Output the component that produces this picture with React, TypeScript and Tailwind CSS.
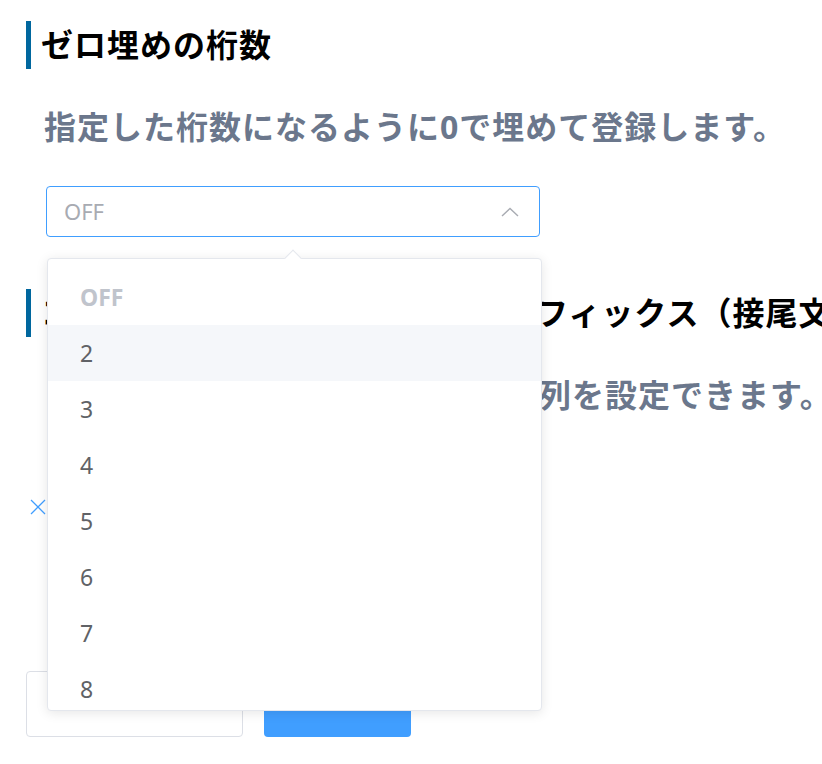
import { useState } from 'react';

const font = { fontFamily: '"Noto Sans", "Noto Sans CJK JP", sans-serif' };

const options = ['OFF', '2', '3', '4', '5', '6', '7', '8', '9', '10'];

function SectionTitle({ children }: { children: React.ReactNode }) {
    return (
        <h2 className="flex items-center h-[48px] border-l-[5px] border-[#00679e] pl-[10px] text-[32px] font-bold text-black tracking-[1px] whitespace-nowrap leading-none">
            {children}
        </h2>
    );
}

function Lead({ children }: { children: React.ReactNode }) {
    return (
        <p className="mt-[38px] ml-[18px] h-[40px] flex items-center text-[32px] font-bold text-[#6b778c] tracking-[1px] whitespace-nowrap">
            {children}
        </p>
    );
}

export default function App() {
    const [hovered] = useState('2');

    return (
        <div className="relative w-[822px] h-[764px] bg-white overflow-hidden" style={font}>
            <div className="pl-[26px] pt-[21px]">
                {/* ゼロ埋め */}
                <SectionTitle>ゼロ埋めの桁数</SectionTitle>
                <Lead>指定した桁数になるように0で埋めて登録します。</Lead>

                <div className="relative mt-[39px] ml-[20px] w-[494px]">
                    <div className="flex items-center justify-between h-[51px] border border-[#409eff] rounded-[4px] pl-[17px] pr-[20px]">
                        <span className="text-[22px] text-[#a8abb2]">OFF</span>
                        <svg width="18" height="10" viewBox="0 0 18 10" fill="none" stroke="#a8abb2" strokeWidth="1.4">
                            <polyline points="1,9 9,1.5 17,9" />
                        </svg>
                    </div>

                    {/* Dropdown */}
                    <div className="absolute left-[1px] top-[72px] z-10 w-[495px] h-[453px] bg-white border border-[#e4e7ed] rounded-[4px] shadow-[0_2px_12px_0_rgba(0,0,0,0.1)]">
                        <div className="absolute -top-[7px] left-[239px] w-[12px] h-[12px] rotate-45 bg-white border-t border-l border-[#e4e7ed]"></div>
                        <div className="relative h-full overflow-hidden rounded-[4px] pt-[10px]">
                            {options.map(opt => (
                                <div
                                    key={opt}
                                    className={`flex items-center h-[56px] px-[32px] text-[23px] ${opt === 'OFF' ? 'font-bold text-[#c0c4cc]' : 'text-[#606266]'} ${opt === hovered ? 'bg-[#f5f7fa]' : ''}`}
                                >
                                    {opt}
                                </div>
                            ))}
                        </div>
                    </div>
                </div>

                {/* サフィックス */}
                <div className="mt-[52px]">
                    <SectionTitle>コード番号の末尾に付与されるサフィックス（接尾文字列）</SectionTitle>
                </div>
                <Lead>コードの末尾に付ける任意の文字列を設定できます。</Lead>

                <div className="mt-[82px] ml-[4px] flex items-center gap-2 h-[20px]">
                    <svg width="16" height="16" viewBox="0 0 16 16" fill="none" stroke="#409eff" strokeWidth="1.3">
                        <line x1="1" y1="1" x2="15" y2="15" />
                        <line x1="15" y1="1" x2="1" y2="15" />
                    </svg>
                    <span className="text-[18px] text-[#409eff]">クリア</span>
                </div>

                <div className="mt-[154px] flex gap-[21px]">
                    <button className="w-[217px] h-[66px] pb-[8px] border border-[#dcdfe6] rounded-[4px] bg-white text-[16px] text-[#606266]">
                        キャンセル
                    </button>
                    <button className="w-[147px] h-[66px] pb-[8px] rounded-[4px] bg-[#409eff] text-[16px] text-white">
                        保存
                    </button>
                </div>
            </div>
        </div>
    );
}
